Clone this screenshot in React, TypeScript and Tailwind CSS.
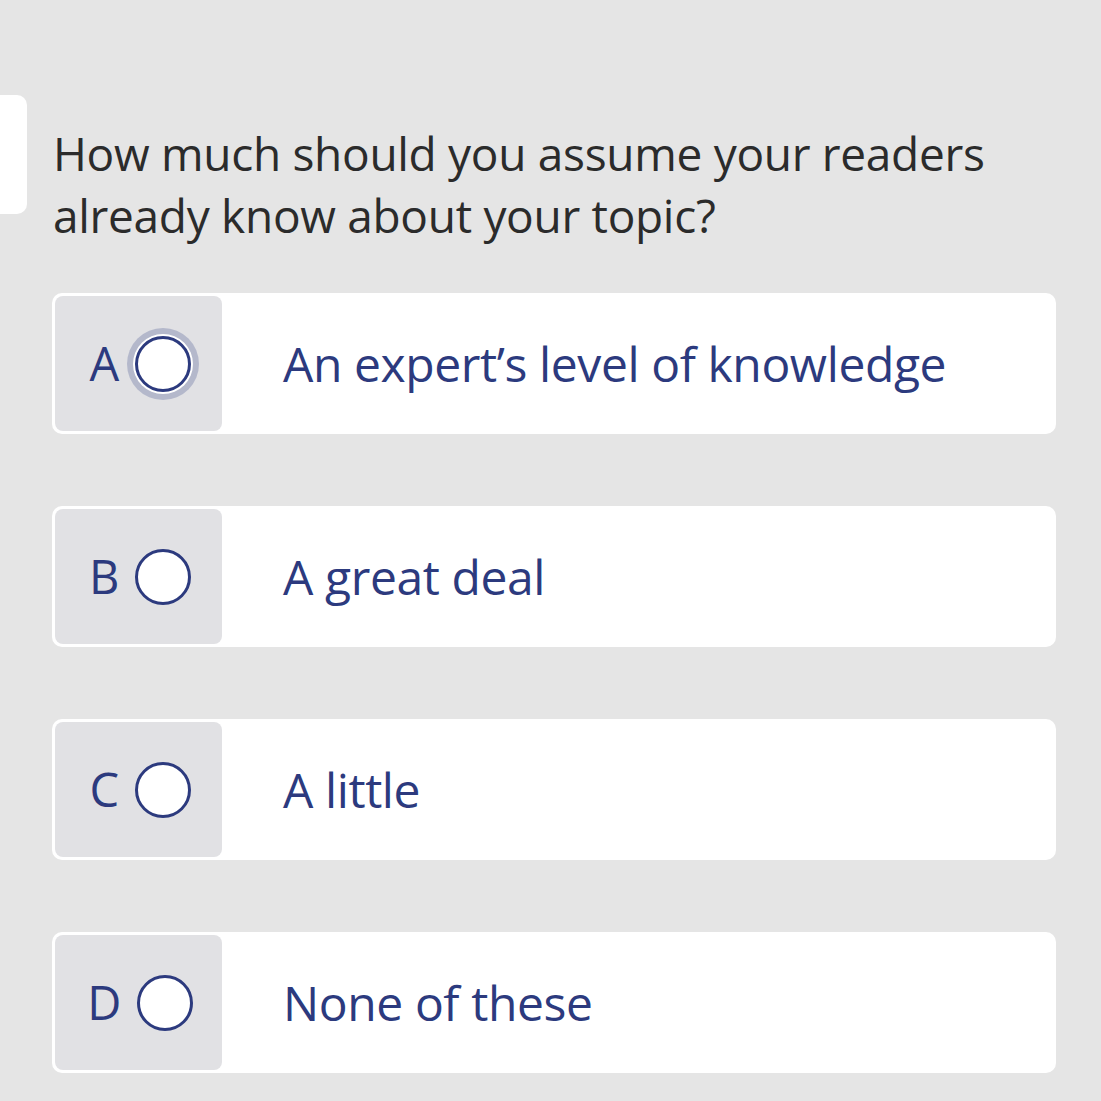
import React from "react";

const options = [
  { letter: "A", text: "An expert\u2019s level of knowledge", focused: true },
  { letter: "B", text: "A great deal" },
  { letter: "C", text: "A little" },
  { letter: "D", text: "None of these" },
];

export default function App() {
  return (
    <div
      className="relative w-[1101px] h-[1101px] overflow-hidden bg-[#e5e5e5]"
      style={{ fontFamily: '"Open Sans", "Noto Sans", sans-serif' }}
    >
      <div className="absolute left-0 top-[95px] w-[27px] h-[119px] bg-white rounded-r-[10px]" />
      <div className="pl-[52px] pr-[45px] pt-[122px]">
        <h1 className="pl-[1px] text-[46px] leading-[62px] text-[#2b2b2b] font-normal tracking-[-0.3px]">
          How much should you assume your readers already know about your topic?
        </h1>
        <div className="mt-[47px] flex flex-col gap-[72px]">
          {options.map((o) => (
            <div
              key={o.letter}
              className="flex h-[141px] bg-white rounded-[10px] p-[3px] pr-0"
            >
              <div className="w-[167px] shrink-0 bg-[#e1e1e4] rounded-[8px] flex items-center justify-center gap-[16px] pl-[3px]">
                <span className="text-[47px] leading-none text-[#2c3a7e] tracking-[-0.5px]">{o.letter}</span>
                <span
                  className={
                    "block w-[56px] h-[56px] rounded-full bg-white border-[3px] border-[#2c3a7e] " +
                    (o.focused ? "shadow-[0_0_0_2px_#ffffff,0_0_0_8px_#b4b8cb]" : "")
                  }
                />
              </div>
              <div className="flex items-center pl-[61px]">
                <span className="text-[48px] leading-none text-[#2c3a7e] tracking-[-0.4px]">{o.text}</span>
              </div>
            </div>
          ))}
        </div>
      </div>
    </div>
  );
}
